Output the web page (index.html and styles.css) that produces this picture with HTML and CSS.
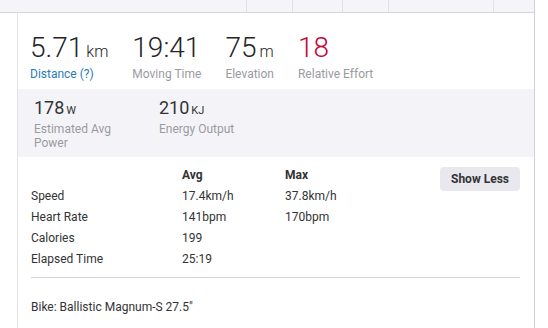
FILE: index.html
```html
<!DOCTYPE html>
<html lang="en">
<head>
  <meta charset="UTF-8" />
  <title>Activity Stats</title>
  <link rel="stylesheet" href="styles.css">
</head>
<body>

<div class="page">
  <!-- tab strip -->
  <div class="tabs">
    <div class="tab"></div>
    <div class="tab"></div>
    <div class="tab"></div>
    <div class="tab"></div>
    <div class="tab"></div>
    <div class="tab"></div>
  </div>

  <div class="card">
    <div class="stats">
      <div class="stat">
        <div class="stat-value">5.71<span class="unit">km</span></div>
        <div class="stat-label link">Distance (?)</div>
      </div>
      <div class="stat">
        <div class="stat-value">19:41</div>
        <div class="stat-label">Moving Time</div>
      </div>
      <div class="stat">
        <div class="stat-value">75<span class="unit">m</span></div>
        <div class="stat-label">Elevation</div>
      </div>
      <div class="stat">
        <div class="stat-value effort">18</div>
        <div class="stat-label">Relative Effort</div>
      </div>
    </div>

    <div class="more-stats">
      <div class="small-stat">
        <div class="small-value">178<span class="small-unit">W</span></div>
        <div class="small-label">Estimated Avg Power</div>
      </div>
      <div class="small-stat">
        <div class="small-value">210<span class="small-unit">kJ</span></div>
        <div class="small-label">Energy Output</div>
      </div>
    </div>

    <div class="details">
      <div class="details-table">
        <div></div>
        <div class="th">Avg</div>
        <div class="th">Max</div>

        <div>Speed</div>
        <div>17.4km/h</div>
        <div>37.8km/h</div>

        <div>Heart Rate</div>
        <div>141bpm</div>
        <div>170bpm</div>

        <div>Calories</div>
        <div>199</div>
        <div></div>

        <div>Elapsed Time</div>
        <div>25:19</div>
        <div></div>
      </div>
      <button class="toggle-btn">Show Less</button>
    </div>

    <div class="gear">Bike: Ballistic Magnum-S 27.5"</div>
  </div>
</div>

</body>
</html>
```

FILE: styles.css
```css
body {
  margin: 0;
  font-family: Roboto, "Liberation Sans", sans-serif;
  color: #333;
  background: #fff;
}
.page {
  width: 534px;
  min-height: 100vh;
  border-right: 1px solid #cfcfd4;
  display: flex;
  flex-direction: column;
}
.tabs {
  display: grid;
  grid-template-columns: 247px 46px 50px 46px 105px 1fr;
  height: 12px;
  background: #f5f5f9;
  border-bottom: 1px solid #d4d4d9;
}
.tab {
  border-right: 1px solid #e2e2e6;
}
.tab:last-child {
  border-right: none;
}
.card {
  flex: 1;
  margin-left: 17px;
  border-left: 1px solid #e4e4e8;
}

/* main stats */
.stats {
  display: flex;
  gap: 24px;
  padding: 19px 14px 7px 12px;
}
.stat-value {
  font-size: 28px;
  font-weight: 300;
  line-height: 32px;
  color: #242428;
}
.stat-value.effort {
  color: #c4063a;
}
.unit {
  font-size: 16px;
  line-height: 1;
  margin-left: 3px;
}
.stat-label {
  margin-top: 2px;
  font-size: 12px;
  line-height: 16px;
  color: #9a9aa1;
}
.stat-label.link {
  color: #2a7ab8;
}

/* secondary stats */
.more-stats {
  display: grid;
  grid-template-columns: 100px 100px;
  column-gap: 25px;
  padding: 8px 16px 7px;
  background: #f4f4f8;
}
.small-value {
  font-size: 18px;
  line-height: 22px;
  color: #333;
}
.small-unit {
  font-size: 11px;
  line-height: 1;
  margin-left: 2px;
  text-transform: uppercase;
}
.small-label {
  margin-top: 3px;
  font-size: 12px;
  line-height: 14px;
  color: #9a9aa1;
}

/* details table */
.details {
  display: flex;
  justify-content: space-between;
  align-items: flex-start;
  margin: 0 14px 0 13px;
  padding: 8px 0 7px;
  border-bottom: 1px solid #d6d6d9;
}
.details-table {
  display: grid;
  grid-template-columns: 151px 103px 100px;
  grid-auto-rows: 21px;
  font-size: 12px;
  line-height: 21px;
  color: #333;
}
.details-table .th {
  font-weight: 700;
  margin-bottom: 1px;
}
.toggle-btn {
  margin-top: 2px;
  height: 24px;
  width: 80px;
  padding: 0;
  border: none;
  border-radius: 4px;
  background: #e8e8ee;
  font-family: Roboto, "Liberation Sans", sans-serif;
  font-size: 12px;
  font-weight: 700;
  color: #333;
  cursor: pointer;
}
.gear {
  padding: 21px 13px 0;
  font-size: 12px;
  line-height: 16px;
  color: #333;
}
```
